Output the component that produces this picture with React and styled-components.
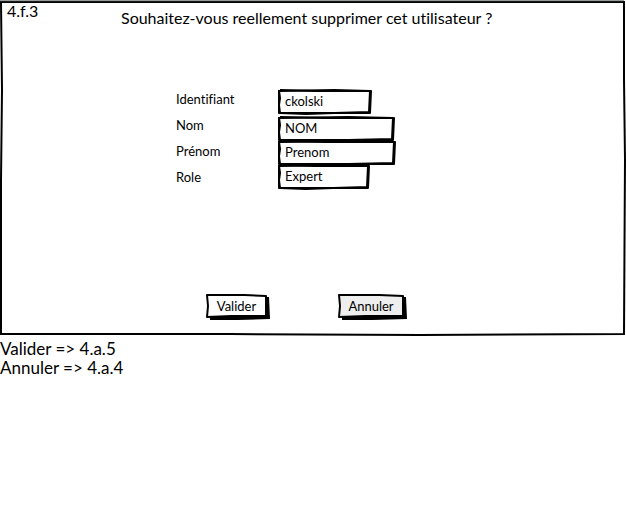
import React from "react";
import styled, { createGlobalStyle } from "styled-components";

const GlobalStyle = createGlobalStyle`
  * { box-sizing: border-box; }
  body {
    margin: 0;
    background: #fff;
    color: #000;
    font-family: Lato, "Open Sans", sans-serif;
    font-variant-ligatures: none;
  }
`;

const Page = styled.main`
  display: flex;
  flex-direction: column;
`;

const Panel = styled.form`
  position: relative;
  display: flex;
  flex-direction: column;
  padding: 2px 0 16px;
`;

const Header = styled.header`
  display: grid;
  grid-template-columns: 114px 1fr;
  padding-left: 7px;
`;

const Code = styled.span`
  font-size: 16px;
  line-height: 18px;
`;

const Title = styled.h1`
  margin: 0;
  padding-top: 6px;
  font-size: 16px;
  font-weight: 400;
  line-height: 20px;
`;

const Fields = styled.div`
  display: grid;
  grid-template-columns: 102px 1fr;
  padding: 58px 0 0 176px;
`;

const Labels = styled.div`
  display: flex;
  flex-direction: column;
`;

const Label = styled.label`
  font-size: 13px;
  line-height: 26px;
`;

const Inputs = styled.div`
  display: grid;
  grid-template-rows: 27px repeat(3, 24px);
  padding-top: 3px;
`;

const FieldBox = styled.div`
  position: relative;
  width: ${(p) => p.$width}px;
  height: 24px;
`;

const Input = styled.input`
  width: 100%;
  height: 100%;
  padding: 0 7px;
  border: 0;
  outline-offset: 2px;
  background: transparent;
  color: inherit;
  font-family: inherit;
  font-size: 13px;
`;

const Actions = styled.div`
  display: flex;
  gap: 68px;
  padding: 104px 0 0 206px;
`;

const Button = styled.button`
  position: relative;
  width: ${(p) => p.$width}px;
  height: 26px;
  padding: 0 3px 2px 0;
  border: 0;
  background: transparent;
  color: inherit;
  font-family: inherit;
  font-size: 13px;
  cursor: pointer;
`;

const Caption = styled.span`
  position: relative;
`;

const Notes = styled.footer`
  padding: 3px 0;
  font-size: 17px;
  line-height: 19px;
`;

const Note = styled.p`
  margin: 0;
`;

const Drawing = styled.svg`
  position: absolute;
  inset: 0;
  width: 100%;
  height: 100%;
  overflow: visible;
  pointer-events: none;
`;

const FrameOutline = () => (
  <Drawing viewBox="0 0 626 337" preserveAspectRatio="none" aria-hidden="true">
    <path d="M1 2 L624 2 L624 80 L625 160 L624 335 L420 336 L230 335 L1 335 L1 180 L2 90 Z" fill="none" stroke="#000" strokeWidth="2" />
    <path d="M0 1 L140 1 L300 1 L624 1" fill="none" stroke="#333a36" strokeWidth="1" />
  </Drawing>
);

const FieldOutline = ({ width }) => (
  <Drawing aria-hidden="true">
    <path d={`M1 2 L${width * 0.6} 1 L${width - 2} 2 L${width - 3} 23 L${width * 0.6} 24 L${width * 0.3} 25 L2 24 L1 16 L2 9 Z`} fill="none" stroke="#000" strokeWidth="2" strokeLinejoin="round" />
    <path d={`M2 1 L${width * 0.4} 2 L${width - 1} 2 L${width - 2} 24 L${width * 0.5} 24 L1 24 L1 1`} fill="none" stroke="#000" strokeWidth="2" strokeLinejoin="round" />
  </Drawing>
);

const ButtonOutline = ({ width, fill }) => (
  <Drawing aria-hidden="true">
    <path d={`M4 4 L${width - 1} 3 L${width} 25 L${width * 0.5} 26 L4 26 Z`} fill="#000" />
    <path d={`M1 1 L${width * 0.6} 1 L${width - 4} 2 L${width - 4} 22 L${width * 0.4} 22 L1 23 L2 12 Z`} fill={fill} stroke="#000" strokeWidth="2" strokeLinejoin="round" />
  </Drawing>
);

const fields = [
  { id: "identifiant", label: "Identifiant", value: "ckolski", width: 94 },
  { id: "nom", label: "Nom", value: "NOM", width: 117 },
  { id: "prenom", label: "Prénom", value: "Prenom", width: 118 },
  { id: "role", label: "Role", value: "Expert", width: 92 },
];

const actions = [
  { label: "Valider", width: 64, fill: "#fff" },
  { label: "Annuler", width: 69, fill: "#eee" },
];

export default function App() {
  return (
    <Page>
      <GlobalStyle />
      <Panel onSubmit={(e) => e.preventDefault()}>
        <FrameOutline />
        <Header>
          <Code>4.f.3</Code>
          <Title>Souhaitez-vous reellement supprimer cet utilisateur ?</Title>
        </Header>
        <Fields>
          <Labels>
            {fields.map((f) => (
              <Label key={f.id} htmlFor={f.id}>{f.label}</Label>
            ))}
          </Labels>
          <Inputs>
            {fields.map((f) => (
              <FieldBox key={f.id} $width={f.width}>
                <FieldOutline width={f.width} />
                <Input id={f.id} defaultValue={f.value} />
              </FieldBox>
            ))}
          </Inputs>
        </Fields>
        <Actions>
          {actions.map((a) => (
            <Button key={a.label} type="button" $width={a.width}>
              <ButtonOutline width={a.width} fill={a.fill} />
              <Caption>{a.label}</Caption>
            </Button>
          ))}
        </Actions>
      </Panel>
      <Notes>
        <Note>Valider =&gt; 4.a.5</Note>
        <Note>Annuler =&gt; 4.a.4</Note>
      </Notes>
    </Page>
  );
}
